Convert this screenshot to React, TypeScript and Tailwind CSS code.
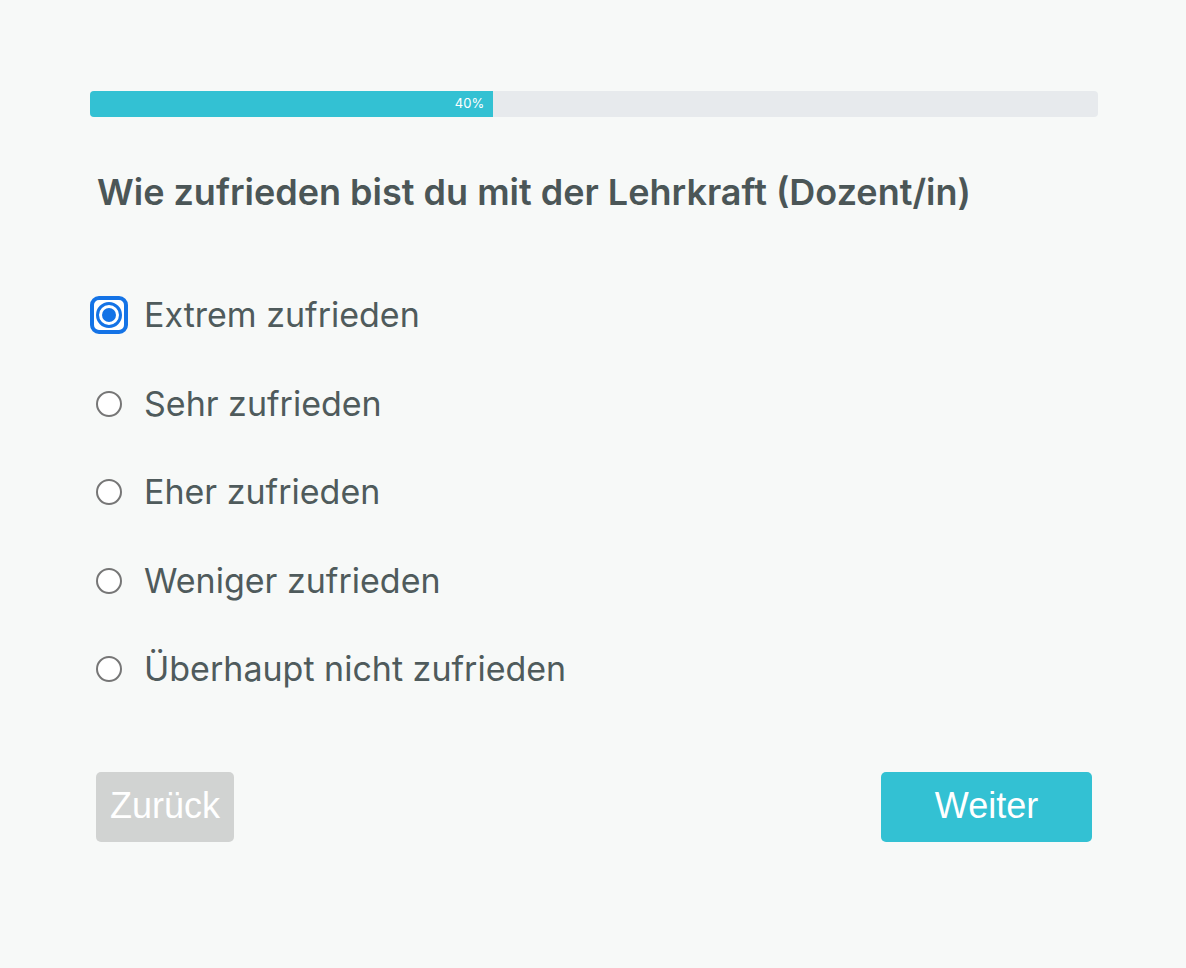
import { useState } from 'react';

const options = [
  'Extrem zufrieden',
  'Sehr zufrieden',
  'Eher zufrieden',
  'Weniger zufrieden',
  'Überhaupt nicht zufrieden',
];

function Radio({ checked }: { checked: boolean }) {
  if (checked) {
    return (
      <span className="w-[38px] h-[38px] -ml-[6px] rounded-[9px] border-[4px] border-[#1473e6] bg-white flex items-center justify-center shrink-0">
        <span className="w-[26px] h-[26px] rounded-full border-[3px] border-[#1473e6] bg-white flex items-center justify-center">
          <span className="w-[14px] h-[14px] rounded-full bg-[#1473e6]" />
        </span>
      </span>
    );
  }
  return <span className="w-[26px] h-[26px] rounded-full border-2 border-[#767676] bg-white shrink-0" />;
}

export default function App() {
  const [selected, setSelected] = useState(0);
  const progress = 40;

  return (
    <div className="min-h-[968px] w-full bg-[#f7f9f8] font-['Inter',sans-serif]">
      <div className="pt-[91px] pl-[90px] w-[1098px]">
        {/* Progress */}
        <div className="h-[26px] w-[1008px] rounded-[4px] bg-[#e7eaed] overflow-hidden">
          <div
            className="h-full bg-[#33c1d3] flex items-center justify-end pr-[9px] text-white text-[13px]"
            style={{ width: `${progress}%` }}
          >
            {progress}%
          </div>
        </div>

        <div className="px-[6px]">
          <h1 className="mt-[53px] pl-px text-[36px] leading-[44px] font-semibold text-[#4b5657]">
            Wie zufrieden bist du mit der Lehrkraft (Dozent/in)
          </h1>

          <div className="mt-[57px] flex flex-col">
            {options.map((o, i) => (
              <label
                key={o}
                onClick={() => setSelected(i)}
                className="h-[88.5px] flex items-center gap-[22px] cursor-pointer"
              >
                <span className="w-[26px] flex justify-start">
                  <Radio checked={selected === i} />
                </span>
                <span className="text-[34px] leading-none text-[#4f5b5c]">{o}</span>
              </label>
            ))}
          </div>

          {/* Buttons */}
          <div className="mt-[58px] flex justify-between font-['Liberation_Sans',Arial,sans-serif]">
            <button className="h-[70px] w-[138px] rounded-[5px] bg-[#d1d3d2] text-white text-[36px] leading-none pb-[2px]">
              Zurück
            </button>
            <button className="h-[70px] w-[211px] rounded-[5px] bg-[#33c1d3] text-white text-[36px] leading-none pb-[2px]">
              Weiter
            </button>
          </div>
        </div>
      </div>
    </div>
  );
}
